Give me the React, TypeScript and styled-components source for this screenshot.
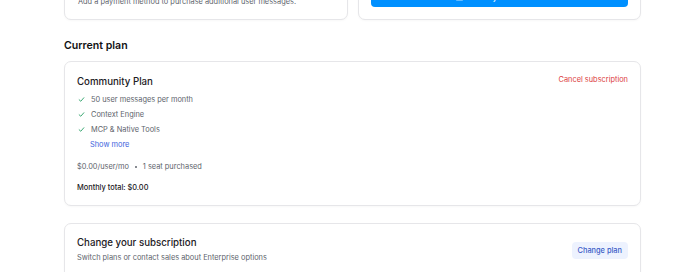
import styled, { createGlobalStyle } from "styled-components";

const GlobalStyle = createGlobalStyle`
  html, body {
    margin: 0;
    padding: 0;
    background: #ffffff;
    overflow: hidden;
  }
  body {
    font-family: Inter, "Noto Sans", sans-serif;
    color: #1c2024;
    -webkit-font-smoothing: antialiased;
  }
`;

const Page = styled.div`
  width: 577px;
  margin: -44px 0 0 64px;
  display: flex;
  flex-direction: column;
`;

const TopRow = styled.div`
  display: grid;
  grid-template-columns: 1fr 1fr;
  gap: 10px;
`;

const Card = styled.div<{ $pad?: string }>`
  background: #fff;
  border: 1px solid #e6e6e9;
  border-radius: 7px;
  box-shadow: 0 1px 2px rgba(0, 0, 0, 0.03);
  padding: ${(p) => p.$pad ?? "12px"};
  box-sizing: border-box;
`;

const TopCard = styled(Card)`
  height: 64px;
  display: flex;
  flex-direction: column;
  justify-content: flex-end;
  gap: 4px;
`;

const SectionTitle = styled.h2`
  margin: 18px 0 7px;
  font-size: 10.6px;
  line-height: 16px;
  font-weight: 600;
  color: #111113;
`;

const CardTitle = styled.div`
  font-size: 9.7px;
  line-height: 14px;
  font-weight: 500;
  color: #1c2024;
`;

const Muted = styled.div`
  font-size: 7.4px;
  line-height: 12px;
  color: #60646c;
`;

const PrimaryButton = styled.button`
  height: 22px;
  width: 100%;
  border: none;
  border-radius: 4px;
  background: #0090ff;
  color: #fff;
  font-family: inherit;
  font-size: 7.4px;
  font-weight: 500;
  display: flex;
  align-items: center;
  justify-content: center;
  gap: 4px;
`;

const PlanHeader = styled.div`
  display: flex;
  justify-content: space-between;
  align-items: flex-start;
`;

const CancelLink = styled.span`
  font-size: 7.4px;
  line-height: 12px;
  margin-top: -1px;
  color: #dc3e42;
`;

const FeatureList = styled.ul`
  list-style: none;
  margin: 3px 0 0;
  padding: 0;
`;

const Feature = styled.li`
  display: flex;
  align-items: center;
  gap: 6px;
  height: 15px;
  font-size: 7.4px;
  color: #60646c;
  padding-left: 1px;
`;

const ShowMore = styled.div`
  height: 15px;
  line-height: 15px;
  padding-left: 13px;
  font-size: 7.4px;
  color: #3e63dd;
`;

const PriceLine = styled(Muted)`
  margin-top: 9px;
  display: flex;
  align-items: center;
  gap: 6px;
`;

const Dot = styled.span`
  width: 2px;
  height: 2px;
  border-radius: 50%;
  background: #60646c;
`;

const Total = styled.div`
  margin-top: 9px;
  font-size: 7.4px;
  line-height: 12px;
  font-weight: 500;
  color: #1c2024;
`;

const ChangeCard = styled(Card)`
  margin-top: 17px;
  display: flex;
  align-items: center;
  justify-content: space-between;
  padding: 12px 12px 14px;
`;

const ChangeText = styled.div`
  display: flex;
  flex-direction: column;
  gap: 2px;
`;

const SoftButton = styled.button`
  height: 17px;
  padding: 0 6px;
  border: none;
  border-radius: 4px;
  background: #edf2fe;
  color: #3a5bc7;
  font-family: inherit;
  font-size: 7.4px;
  font-weight: 500;
`;

const Check = () => (
  <svg width="7" height="7" viewBox="0 0 12 12" fill="none">
    <path
      d="M2 6.5 L4.8 9 L10 3"
      stroke="#30a46c"
      strokeWidth="1.6"
      strokeLinecap="round"
      strokeLinejoin="round"
    />
  </svg>
);

const CardIcon = () => (
  <svg width="9" height="9" viewBox="0 0 16 16" fill="none">
    <rect x="1.5" y="3.5" width="13" height="9" rx="1.5" stroke="#fff" strokeWidth="1.3" />
    <path d="M1.5 6.5h13" stroke="#fff" strokeWidth="1.3" />
  </svg>
);

const features = ["50 user messages per month", "Context Engine", "MCP & Native Tools"];

export default function App() {
  return (
    <>
      <GlobalStyle />
      <Page>
        <TopRow>
          <TopCard $pad="12px 13px 11px">
            <CardTitle>Purchase additional messages</CardTitle>
            <Muted>Add a payment method to purchase additional user messages.</Muted>
          </TopCard>
          <TopCard $pad="12px 12px 12px">
            <CardTitle>Payment method</CardTitle>
            <PrimaryButton>
              <CardIcon />
              Add Payment Method
            </PrimaryButton>
          </TopCard>
        </TopRow>

        <SectionTitle>Current plan</SectionTitle>

        <Card $pad="13px 12px 11px">
          <PlanHeader>
            <CardTitle>Community Plan</CardTitle>
            <CancelLink>Cancel subscription</CancelLink>
          </PlanHeader>
          <FeatureList>
            {features.map((f) => (
              <Feature key={f}>
                <Check />
                {f}
              </Feature>
            ))}
          </FeatureList>
          <ShowMore>Show more</ShowMore>
          <PriceLine>
            $0.00/user/mo
            <Dot />1 seat purchased
          </PriceLine>
          <Total>Monthly total: $0.00</Total>
        </Card>

        <ChangeCard>
          <ChangeText>
            <CardTitle>Change your subscription</CardTitle>
            <Muted>Switch plans or contact sales about Enterprise options</Muted>
          </ChangeText>
          <SoftButton>Change plan</SoftButton>
        </ChangeCard>
      </Page>
    </>
  );
}
